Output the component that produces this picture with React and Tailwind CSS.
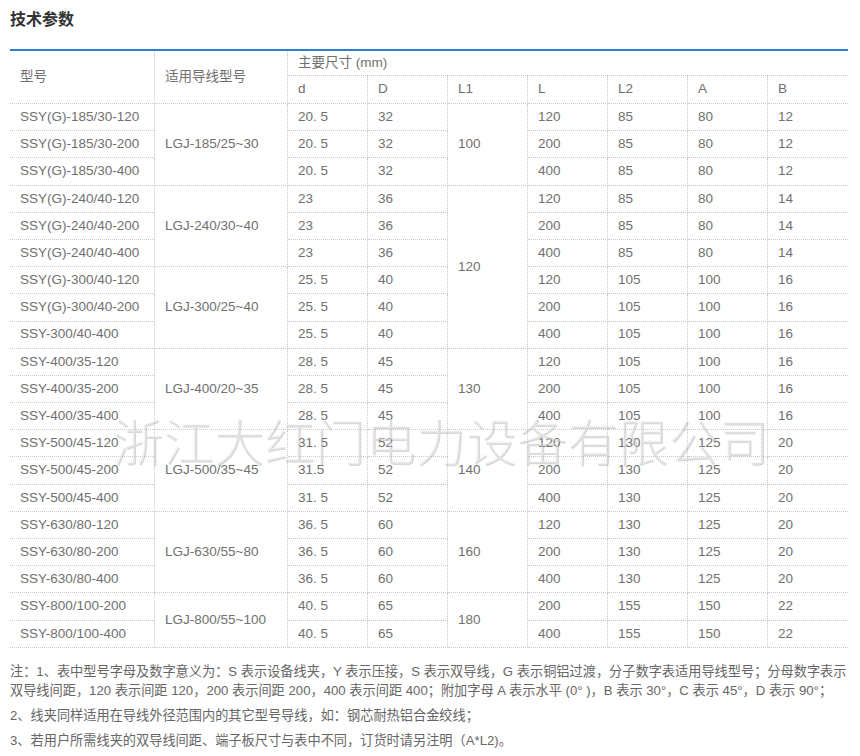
import React from "react";

const rows = [
  ["SSY(G)-185/30-120", "20. 5", "32", "120", "85", "80", "12"],
  ["SSY(G)-185/30-200", "20. 5", "32", "200", "85", "80", "12"],
  ["SSY(G)-185/30-400", "20. 5", "32", "400", "85", "80", "12"],
  ["SSY(G)-240/40-120", "23", "36", "120", "85", "80", "14"],
  ["SSY(G)-240/40-200", "23", "36", "200", "85", "80", "14"],
  ["SSY(G)-240/40-400", "23", "36", "400", "85", "80", "14"],
  ["SSY(G)-300/40-120", "25. 5", "40", "120", "105", "100", "16"],
  ["SSY(G)-300/40-200", "25. 5", "40", "200", "105", "100", "16"],
  ["SSY-300/40-400", "25. 5", "40", "400", "105", "100", "16"],
  ["SSY-400/35-120", "28. 5", "45", "120", "105", "100", "16"],
  ["SSY-400/35-200", "28. 5", "45", "200", "105", "100", "16"],
  ["SSY-400/35-400", "28. 5", "45", "400", "105", "100", "16"],
  ["SSY-500/45-120", "31. 5", "52", "120", "130", "125", "20"],
  ["SSY-500/45-200", "31.5", "52", "200", "130", "125", "20"],
  ["SSY-500/45-400", "31. 5", "52", "400", "130", "125", "20"],
  ["SSY-630/80-120", "36. 5", "60", "120", "130", "125", "20"],
  ["SSY-630/80-200", "36. 5", "60", "200", "130", "125", "20"],
  ["SSY-630/80-400", "36. 5", "60", "400", "130", "125", "20"],
  ["SSY-800/100-200", "40. 5", "65", "200", "155", "150", "22"],
  ["SSY-800/100-400", "40. 5", "65", "400", "155", "150", "22"],
];

const conductors = {
  0: ["LGJ-185/25~30", "row-span-3"],
  3: ["LGJ-240/30~40", "row-span-3"],
  6: ["LGJ-300/25~40", "row-span-3"],
  9: ["LGJ-400/20~35", "row-span-3"],
  12: ["LGJ-500/35~45", "row-span-3"],
  15: ["LGJ-630/55~80", "row-span-3"],
  18: ["LGJ-800/55~100", "row-span-2"],
};

const l1s = {
  0: ["100", "row-span-3"],
  3: ["120", "row-span-6"],
  9: ["130", "row-span-3"],
  12: ["140", "row-span-3"],
  15: ["160", "row-span-3"],
  18: ["180", "row-span-2"],
};

const cell =
  "flex items-center pl-[10px] border-b border-dotted border-[#c9c9c9] whitespace-nowrap";
const cellR = cell + " border-r";

export default function App() {
  const body = [];
  rows.forEach((r, i) => {
    body.push(
      <div key={`m${i}`} className={cellR}>
        {r[0]}
      </div>
    );
    if (conductors[i]) {
      body.push(
        <div key={`c${i}`} className={`${cellR} ${conductors[i][1]}`}>
          {conductors[i][0]}
        </div>
      );
    }
    body.push(
      <div key={`d${i}`} className={cellR}>
        {r[1]}
      </div>
    );
    body.push(
      <div key={`D${i}`} className={cellR}>
        {r[2]}
      </div>
    );
    if (l1s[i]) {
      body.push(
        <div key={`l1${i}`} className={`${cellR} ${l1s[i][1]}`}>
          {l1s[i][0]}
        </div>
      );
    }
    body.push(
      <div key={`L${i}`} className={cellR}>
        {r[3]}
      </div>
    );
    body.push(
      <div key={`L2${i}`} className={cellR}>
        {r[4]}
      </div>
    );
    body.push(
      <div key={`A${i}`} className={cellR}>
        {r[5]}
      </div>
    );
    body.push(
      <div key={`B${i}`} className={cell}>
        {r[6]}
      </div>
    );
  });

  return (
    <div className="w-[860px] h-[756px] bg-white overflow-hidden font-['Liberation_Sans','Noto_Sans_CJK_SC',sans-serif]">
      <div className="pl-[10px] w-[848px]">
        <div className="h-[49px] pt-[10px] text-[16px] leading-[20px] font-bold text-[#333]">
          技术参数
        </div>
        <div className="h-[2px] bg-[#2f7fcf]" />
        <div className="relative">
          <div className="grid grid-cols-[145px_133px_repeat(7,80px)] grid-rows-[25px_28px_repeat(20,27.2px)] text-[13.5px] text-[#707070]">
            <div className={`${cellR} row-span-2`}>型号</div>
            <div className={`${cellR} row-span-2`}>适用导线型号</div>
            <div className={`${cell} col-span-7`}>主要尺寸 (mm)</div>
            <div className={cellR}>d</div>
            <div className={cellR}>D</div>
            <div className={cellR}>L1</div>
            <div className={cellR}>L</div>
            <div className={cellR}>L2</div>
            <div className={cellR}>A</div>
            <div className={cell}>B</div>
            {body}
          </div>
          <div className="pointer-events-none absolute left-[103px] top-[360px] whitespace-nowrap text-[50px] leading-[56px] font-['Noto_Sans_CJK_SC',sans-serif] font-light tracking-[0.5px] text-[rgba(238,238,238,0.45)] [text-shadow:1px_1px_0_rgba(110,110,110,0.28)]">
            浙江大红门电力设备有限公司
          </div>
        </div>
        <div className="mt-[14px] text-[13.2px] leading-[19px] text-[#666]">
          <p className="whitespace-nowrap">
            注：1、表中型号字母及数字意义为：S 表示设备线夹，Y 表示压接，S 表示双导线，G 表示铜铝过渡，分子数字表适用导线型号；分母数字表示
            <br />
            双导线间距，120 表示间距 120，200 表示间距 200，400 表示间距 400；附加字母 A 表示水平 (0° )，B 表示 30°，C 表示 45°，D 表示 90°；
          </p>
          <p className="mt-[6px]">2、线夹同样适用在导线外径范围内的其它型号导线，如：钢芯耐热铝合金绞线；</p>
          <p className="mt-[6px]">3、若用户所需线夹的双导线间距、端子板尺寸与表中不同，订货时请另注明（A*L2)。</p>
        </div>
      </div>
    </div>
  );
}
